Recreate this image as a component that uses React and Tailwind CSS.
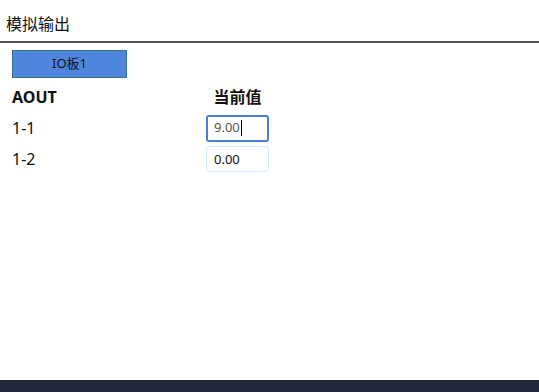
export default function App() {
  const font = { fontFamily: '"Noto Sans", "Noto Sans CJK SC", sans-serif' };
  return (
    <div className="relative h-[392px] w-[539px] bg-white text-[#111]" style={font}>
      <div className="flex h-[43px] items-center border-b-2 border-[#555] pl-[6px] pt-[7px] text-[16px]">
        模拟输出
      </div>
      <div className="px-[12px] pt-[7px]">
        <button className="flex h-[28px] w-[115px] items-center justify-center border border-[#3d6f8f] bg-[#4f86dd] text-[13px] text-[#111]">
          IO板1
        </button>
        <div className="mt-[6px] flex flex-col">
          <div className="flex h-[26px] items-center text-[16px] font-bold">
            <div className="w-[194px]">AOUT</div>
            <div className="w-[63px] text-center">当前值</div>
          </div>
          <div className="flex h-[36px] items-center text-[16px]">
            <div className="w-[194px]">1-1</div>
            <div className="flex h-[27px] w-[63px] items-center rounded-[3px] border-2 border-[#4a7fd8] px-[6px] text-[13px] text-[#555]">
              <span>9.00</span>
              <span className="ml-[1px] h-[16px] w-[1px] bg-black" />
            </div>
          </div>
          <div className="flex h-[26px] items-center text-[16px]">
            <div className="w-[194px]">1-2</div>
            <input
              className="h-[26px] w-[63px] rounded-[3px] border border-[#d4ecf8] px-[7px] text-[13px] text-[#111] outline-none"
              defaultValue="0.00"
            />
          </div>
        </div>
      </div>
      <div className="absolute bottom-0 left-0 h-[12px] w-full bg-[#222839]" />
    </div>
  );
}
